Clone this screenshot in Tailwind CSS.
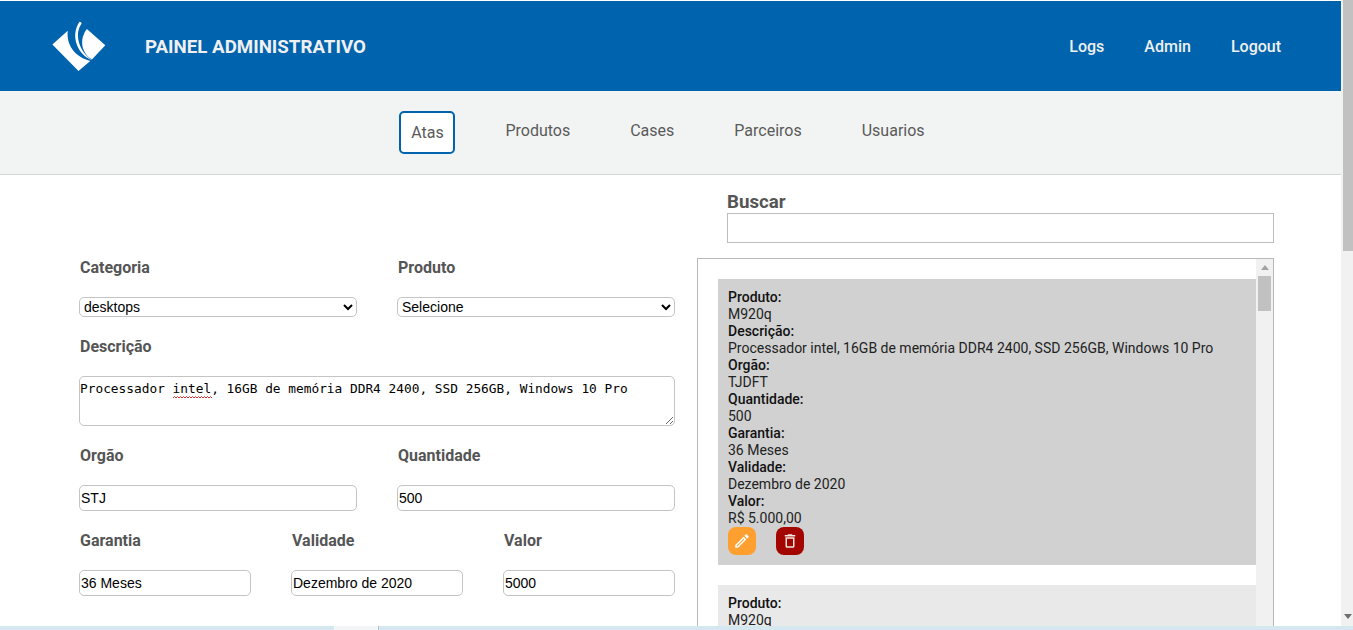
<!DOCTYPE html>
<html lang="pt-BR">
  <head>
    <meta charset="UTF-8" />
    <meta name="viewport" content="width=device-width, initial-scale=1.0" />
    <title>Painel Administrativo</title>
    <script src="https://cdn.jsdelivr.net/npm/@tailwindcss/browser@4"></script>
  </head>
  <body class="bg-white font-['Roboto',sans-serif]">
    <div class="relative flex w-[1353px] h-[630px] overflow-hidden">
      <div class="w-[1341px] h-[630px] overflow-hidden">
        <!-- topo -->
        <header class="mt-px h-[90px] bg-[#0063ae] flex items-center text-[#f0f0f0]">
          <svg class="ml-[50px] w-[57px] h-[52px]" viewBox="60 30 170 155" fill="#fff">
            <path d="M67 103 L113 62 C108 105 135 140 180 152 L145 182 Z" />
            <path d="M148 35 C155 36 156 40 152 44 C132 75 148 125 186 150 C145 135 118 80 148 35 Z" />
            <path d="M170 57 L225 105 L185 148 C155 130 145 90 170 57 Z" />
          </svg>
          <h1 class="ml-[38px] mt-[2px] text-[18.72px] font-bold">PAINEL ADMINISTRATIVO</h1>
          <nav class="ml-auto mr-[60px] mt-[2px] flex gap-[40px] text-[16px] font-medium">
            <a>Logs</a>
            <a>Admin</a>
            <a>Logout</a>
          </nav>
        </header>

        <!-- abas -->
        <nav class="h-[84px] bg-[#f2f4f3] border-b border-[#d4d6d5] pt-[20px] flex justify-center gap-[50px] pr-[17px] text-[16px] text-[#5a5a5a]">
          <a class="h-[43px] w-[56px] flex items-center justify-center bg-white border-2 border-[#0063ae] rounded-[5px]">Atas</a>
          <a class="leading-[39px]">Produtos</a>
          <a class="leading-[39px] ml-[10px]">Cases</a>
          <a class="leading-[39px] ml-[10px]">Parceiros</a>
          <a class="leading-[39px] ml-[10px]">Usuarios</a>
        </nav>

        <main class="flex">
          <!-- formulario -->
          <form class="w-[596px] ml-[79px] pt-[83px] flex flex-col gap-[20px] text-[#555] font-['Liberation_Sans',sans-serif]">
            <div class="grid grid-cols-2 gap-[40px]">
              <div>
                <label class="block h-[19px] mb-[20px] pl-px text-[16px] leading-[19px] font-bold font-['Roboto',sans-serif]">Categoria</label>
                <select class="block w-full h-[20px] border border-[#c4c4c4] rounded-[5px] bg-white text-black text-[14px]">
                  <option>desktops</option>
                </select>
              </div>
              <div>
                <label class="block h-[19px] mb-[20px] pl-px text-[16px] leading-[19px] font-bold font-['Roboto',sans-serif]">Produto</label>
                <select class="block w-full h-[20px] border border-[#c4c4c4] rounded-[5px] bg-white text-black text-[14px]">
                  <option>Selecione</option>
                </select>
              </div>
            </div>
            <div class="relative">
              <label class="block h-[19px] mb-[20px] pl-px text-[16px] leading-[19px] font-bold font-['Roboto',sans-serif]">Descrição</label>
              <textarea class="block w-full h-[50px] border border-[#c4c4c4] rounded-[5px] px-0 py-[4px] text-black text-[12.82px] leading-[15px] font-['DejaVu_Sans_Mono',monospace]" spellcheck="false">Processador intel, 16GB de memória DDR4 2400, SSD 256GB, Windows 10 Pro</textarea>
              <svg class="absolute left-[94px] top-[59px] w-[39px] h-[3px]" viewBox="0 0 39 3" fill="none" stroke="#d0342c" stroke-width="1">
                <path d="M0 2 l1.5 -1.5 l1.5 1.5 l1.5 -1.5 l1.5 1.5 l1.5 -1.5 l1.5 1.5 l1.5 -1.5 l1.5 1.5 l1.5 -1.5 l1.5 1.5 l1.5 -1.5 l1.5 1.5 l1.5 -1.5 l1.5 1.5 l1.5 -1.5 l1.5 1.5 l1.5 -1.5 l1.5 1.5 l1.5 -1.5 l1.5 1.5 l1.5 -1.5 l1.5 1.5 l1.5 -1.5 l1.5 1.5 l1.5 -1.5 l1.5 1.5" />
              </svg>
            </div>
            <div class="grid grid-cols-2 gap-[40px]">
              <div>
                <label class="block h-[19px] mb-[20px] pl-px text-[16px] leading-[19px] font-bold font-['Roboto',sans-serif]">Orgão</label>
                <input class="block w-full h-[26px] border border-[#c4c4c4] rounded-[5px] px-px text-black text-[14px]" value="STJ" />
              </div>
              <div>
                <label class="block h-[19px] mb-[20px] pl-px text-[16px] leading-[19px] font-bold font-['Roboto',sans-serif]">Quantidade</label>
                <input class="block w-full h-[26px] border border-[#c4c4c4] rounded-[5px] px-px text-black text-[14px]" value="500" />
              </div>
            </div>
            <div class="grid grid-cols-3 gap-[40px]">
              <div>
                <label class="block h-[19px] mb-[20px] pl-px text-[16px] leading-[19px] font-bold font-['Roboto',sans-serif]">Garantia</label>
                <input class="block w-full h-[26px] border border-[#c4c4c4] rounded-[5px] px-px text-black text-[14px]" value="36 Meses" />
              </div>
              <div>
                <label class="block h-[19px] mb-[20px] pl-px text-[16px] leading-[19px] font-bold font-['Roboto',sans-serif]">Validade</label>
                <input class="block w-full h-[26px] border border-[#c4c4c4] rounded-[5px] px-px text-black text-[14px]" value="Dezembro de 2020" />
              </div>
              <div>
                <label class="block h-[19px] mb-[20px] pl-px text-[16px] leading-[19px] font-bold font-['Roboto',sans-serif]">Valor</label>
                <input class="block w-full h-[26px] border border-[#c4c4c4] rounded-[5px] px-px text-black text-[14px]" value="5000" />
              </div>
            </div>
          </form>

          <!-- lista de atas -->
          <section class="ml-[22px] w-[577px] pt-[15px]">
            <div class="ml-[30px]">
              <label class="block h-[21px] mb-[2px] text-[18.72px] leading-[24px] font-bold text-[#555]">Buscar</label>
              <input class="block w-full h-[30px] border border-[#bdbdbd] bg-white" />
            </div>
            <div class="mt-[15px] h-[420px] flex border border-[#b9b9b9]">
              <div class="w-[558px] pl-[20px] pt-[20px] flex flex-col gap-[20px] text-[14px] leading-[17px] text-[#222]">
                <article class="bg-[#d1d1d1] px-[10px] py-[10px]">
                  <b class="block font-medium text-[#111]">Produto:</b>
                  <p>M920q</p>
                  <b class="block font-medium text-[#111]">Descrição:</b>
                  <p>Processador intel, 16GB de memória DDR4 2400, SSD 256GB, Windows 10 Pro</p>
                  <b class="block font-medium text-[#111]">Orgão:</b>
                  <p>TJDFT</p>
                  <b class="block font-medium text-[#111]">Quantidade:</b>
                  <p>500</p>
                  <b class="block font-medium text-[#111]">Garantia:</b>
                  <p>36 Meses</p>
                  <b class="block font-medium text-[#111]">Validade:</b>
                  <p>Dezembro de 2020</p>
                  <b class="block font-medium text-[#111]">Valor:</b>
                  <p>R$ 5.000,00</p>
                  <div class="flex gap-[20px]">
                    <button type="button" class="w-[28px] h-[28px] rounded-[8px] bg-[#ff9f2f] flex items-center justify-center">
                      <svg class="w-[18px] h-[18px]" viewBox="0 0 24 24" fill="#fff">
                        <path d="M14.06 9.02l.92.92L5.92 19H5v-.92l9.06-9.06M17.66 3c-.25 0-.51.1-.7.29l-1.83 1.83 3.75 3.75 1.83-1.83c.39-.39.39-1.02 0-1.41l-2.34-2.34c-.2-.2-.45-.29-.71-.29zm-3.6 3.19L3 17.25V21h3.75L17.81 9.94l-3.75-3.75z" />
                      </svg>
                    </button>
                    <button type="button" class="w-[28px] h-[28px] rounded-[8px] bg-[#a30500] flex items-center justify-center">
                      <svg class="w-[18px] h-[18px]" viewBox="0 0 24 24" fill="#f3e6e0">
                        <path d="M16 9v10H8V9h8m-1.5-6h-5l-1 1H5v2h14V4h-3.5l-1-1zM18 7H6v12c0 1.1.9 2 2 2h8c1.1 0 2-.9 2-2V7z" />
                      </svg>
                    </button>
                  </div>
                </article>
                <article class="bg-[#e9e9e9] px-[10px] py-[10px]">
                  <b class="block font-medium text-[#111]">Produto:</b>
                  <p>M920q</p>
                  <b class="block font-medium text-[#111]">Descrição:</b>
                </article>
              </div>
              <!-- barra de rolagem da lista -->
              <div class="w-[17px] bg-[#f1f1f1] flex flex-col items-center pt-[6px]">
                <div class="w-0 h-0 border-x-[4px] border-x-transparent border-b-[5px] border-b-[#a3a3a3]"></div>
                <div class="mt-[6px] w-[13px] h-[35px] bg-[#c1c1c1]"></div>
              </div>
            </div>
          </section>
        </main>
      </div>

      <!-- barra de rolagem da pagina -->
      <div class="w-[12px] h-[630px] bg-[#f1f1f1] flex flex-col">
        <div class="ml-[2px] w-[10px] h-[251px] bg-[#c1c1c1]"></div>
        <div class="mt-[363px] ml-[3px] w-0 h-0 border-x-[4px] border-x-transparent border-t-[5px] border-t-[#6f6f6f]"></div>
      </div>

      <!-- faixa inferior -->
      <div class="absolute left-0 right-0 bottom-0 h-[4px] flex bg-[#d5e8f0]">
        <div class="ml-[334px] w-[44px] bg-[#f2f6f7]"></div>
        <div class="w-px bg-[#b9c4c9]"></div>
      </div>
    </div>
  </body>
</html>
